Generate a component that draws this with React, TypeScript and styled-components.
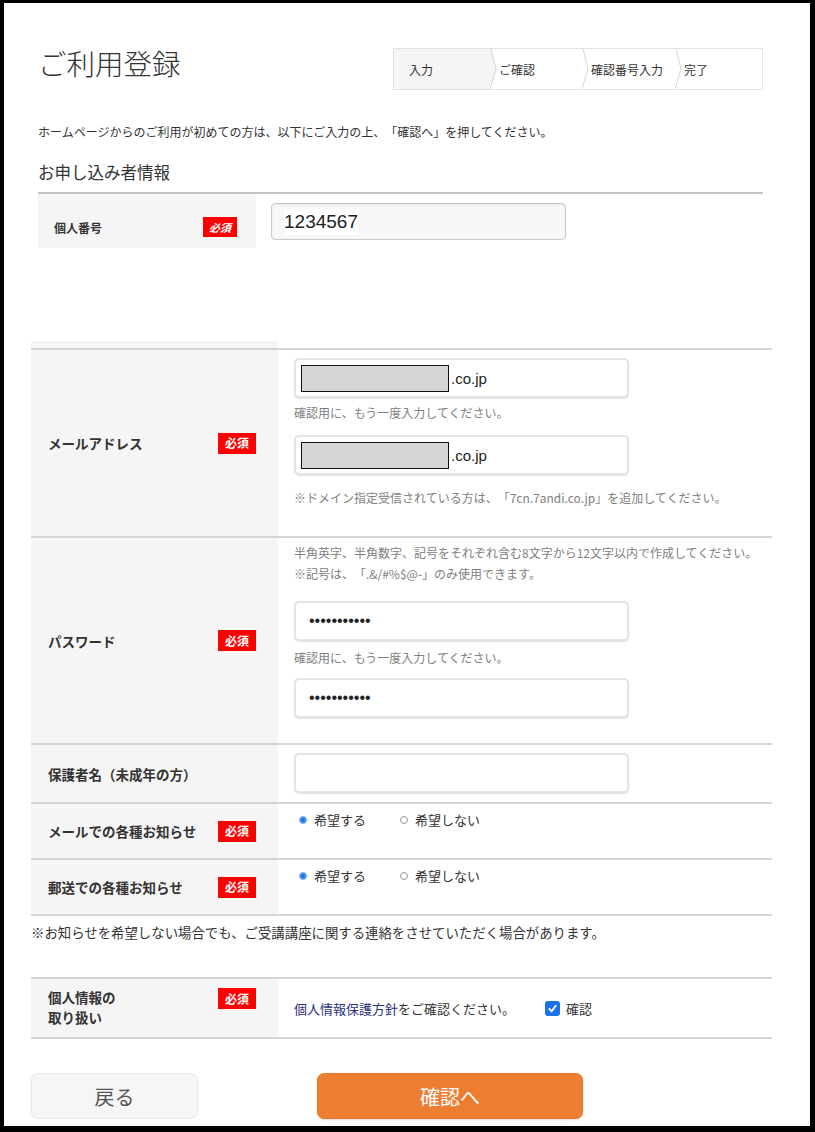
import styled, { createGlobalStyle } from "styled-components";

const GlobalStyle = createGlobalStyle`
  html, body {
    margin: 0;
    padding: 0;
    background: #fff;
  }
  body {
    font-family: "Noto Sans CJK JP", "Noto Sans", sans-serif;
    color: #333;
    text-spacing-trim: space-all;
  }
  * {
    box-sizing: border-box;
  }
`;

const Frame = styled.div`
  width: 815px;
  height: 1132px;
  border-style: solid;
  border-color: #000;
  border-width: 3px 5px 6px 4px;
  background: #fff;
  overflow: hidden;
`;

const Top = styled.section`
  margin-left: 34px;
  width: 725px;
`;

const Header = styled.header`
  display: flex;
  justify-content: space-between;
  align-items: flex-start;
  padding-top: 45px;
`;

const Title = styled.h1`
  margin: -3px 0 0;
  font-size: 28.5px;
  font-weight: 300;
  line-height: 36px;
  color: #333;
`;

const StepBar = styled.ol`
  display: flex;
  margin: 0;
  padding: 0;
  list-style: none;
  width: 370px;
  height: 42px;
  border: 1px solid #e2e2e2;
  background: #fff;
`;

const Step = styled.li<{ $active?: boolean; $w?: number; $pad?: number }>`
  display: flex;
  align-items: center;
  flex: ${(p) => (p.$w ? `0 0 ${p.$w}px` : "1")};
  padding-left: ${(p) => p.$pad ?? 2}px;
  font-size: 12px;
  color: #333;
  background: ${(p) => (p.$active ? "#f5f5f5" : "#fff")};
`;

const ChevronBox = styled.svg`
  flex: 0 0 7px;
  height: 40px;
  display: block;
`;

function Chevron({ filled }: { filled?: boolean }) {
  return (
    <ChevronBox viewBox="0 0 7 40" preserveAspectRatio="none">
      {filled && <polygon points="0,0 1,0 6,20 0,40" fill="#f5f5f5" />}
      <polyline points="1,0 6,20 0,40" fill="none" stroke="#d4d4d4" strokeWidth="1" />
    </ChevronBox>
  );
}

const Intro = styled.p`
  margin: 33px 0 0;
  font-size: 12px;
  line-height: 18px;
`;

const SectionTitle = styled.h2`
  margin: 19px 0 0;
  font-size: 16.5px;
  font-weight: 400;
  line-height: 24px;
`;

const Rule = styled.div`
  margin-top: 8px;
  border-top: 2px solid #c4c4c4;
`;

const TopRow = styled.div`
  display: flex;
  height: 54px;
`;

const TopLabel = styled.div`
  width: 218px;
  display: flex;
  align-items: center;
  justify-content: space-between;
  padding: 12px 19px 0 16px;
  background: #f5f5f5;
  font-size: 12px;
  font-weight: 700;
`;

const Badge = styled.span<{ $small?: boolean }>`
  display: inline-flex;
  align-items: center;
  justify-content: center;
  width: ${(p) => (p.$small ? 34 : 38)}px;
  height: ${(p) => (p.$small ? 20 : 21)}px;
  flex-shrink: 0;
  background: #f00;
  color: #fff;
  font-size: ${(p) => (p.$small ? 11 : 12)}px;
  font-weight: 700;
  font-style: ${(p) => (p.$small ? "italic" : "normal")};
`;

const TopField = styled.div`
  margin: 9px 0 0 15px;
  width: 295px;
  height: 37px;
  display: flex;
  align-items: center;
  padding-left: 12px;
  border: 1px solid #c9c9c9;
  border-radius: 4px;
  background: #f8f8f8;
  box-shadow: inset 0 1px 2px rgba(0, 0, 0, 0.08);
`;

const TopValue = styled.span`
  background: #fff;
  font-family: "Liberation Sans", Arial, sans-serif;
  font-size: 19px;
  line-height: 26px;
  color: #222;
`;

const Lower = styled.section`
  margin: 93px 0 0 27px;
  width: 741px;
`;

const Table = styled.div<{ $mt?: number }>`
  margin-top: ${(p) => p.$mt ?? 0}px;
  border-bottom: 2px solid #d6d6d6;
`;

const Stub = styled.div`
  width: 247px;
  height: 7px;
  background: #f5f5f5;
`;

const Row = styled.div<{ $minH?: number }>`
  display: flex;
  border-top: 2px solid #d6d6d6;
  min-height: ${(p) => p.$minH ?? 0}px;
`;

const Label = styled.div<{ $top?: boolean }>`
  flex: 0 0 247px;
  display: flex;
  align-items: ${(p) => (p.$top ? "flex-start" : "center")};
  justify-content: space-between;
  padding: ${(p) => (p.$top ? "8px 22px 0 17px" : "0 22px 0 17px")};
  background: #f5f5f5;
  font-size: 13.5px;
  font-weight: 700;
  line-height: 20px;
  color: #333;

  ${Badge} {
    margin-top: ${(p) => (p.$top ? 1 : 0)}px;
  }
`;

const Cell = styled.div<{ $pt?: number; $pb?: number; $center?: boolean }>`
  flex: 1;
  padding: ${(p) => p.$pt ?? 0}px 0 ${(p) => p.$pb ?? 0}px 16px;
  display: flex;
  flex-direction: ${(p) => (p.$center ? "row" : "column")};
  align-items: ${(p) => (p.$center ? "center" : "flex-start")};
`;

const Field = styled.div<{ $mt?: number }>`
  margin-top: ${(p) => p.$mt ?? 0}px;
  width: 335px;
  height: 40px;
  display: flex;
  align-items: center;
  padding-left: 5px;
  border: 2px solid #e4e4e4;
  border-radius: 5px;
  background: #fff;
  box-shadow: 0 1px 1px rgba(0, 0, 0, 0.12);
`;

const Redacted = styled.span`
  width: 148px;
  height: 27px;
  border: 1.5px solid #111;
  background: #d6d6d6;
`;

const Domain = styled.span`
  margin-left: 2px;
  font-family: "Liberation Sans", Arial, sans-serif;
  font-size: 15px;
  color: #222;
`;

const Dots = styled.span`
  padding-left: 8px;
  font-family: "Liberation Sans", Arial, sans-serif;
  font-size: 16px;
  color: #222;
`;

const Hint = styled.p<{ $mt?: number; $lh?: number }>`
  margin: ${(p) => p.$mt ?? 0}px 0 0;
  font-size: 12px;
  line-height: ${(p) => p.$lh ?? 15}px;
  color: #808080;
`;

const RadioGroup = styled.div`
  display: flex;
  align-items: center;
  padding-left: 5px;
  line-height: 18px;
  font-size: 13px;
  color: #333;
`;

const RadioOption = styled.label`
  display: flex;
  align-items: center;
  gap: 7px;
  margin-right: 34px;
`;

const RadioDot = styled.span<{ $on?: boolean }>`
  width: 8px;
  height: 8px;
  border-radius: 50%;
  border: 1px solid ${(p) => (p.$on ? "#7fb2f0" : "#999")};
  background: ${(p) => (p.$on ? "#1a73e8" : "#fff")};
  box-shadow: ${(p) => (p.$on ? "inset 0 0 0 1px #4d94f0" : "none")};
`;

const Note = styled.p`
  margin: 7px 0 0;
  font-size: 13.4px;
  line-height: 18px;
  color: #333;
`;

const Body = styled.span`
  font-size: 13px;
  color: #333;
`;

const PolicyLink = styled.a`
  color: #2a3180;
  text-decoration: none;
`;

const Check = styled.span`
  margin-left: 30px;
  width: 15px;
  height: 15px;
  border-radius: 3px;
  background: #1a73e8;
  display: inline-flex;
  align-items: center;
  justify-content: center;
`;

const CheckText = styled.span`
  margin-left: 6px;
  font-size: 13px;
  color: #333;
`;

const Buttons = styled.div`
  display: flex;
  gap: 119px;
  margin-top: 34px;
`;

const Button = styled.button<{ $primary?: boolean }>`
  width: ${(p) => (p.$primary ? 266 : 167)}px;
  height: 46px;
  border-radius: 7px;
  border: 1px solid ${(p) => (p.$primary ? "#e6782c" : "#e6e6e6")};
  background: ${(p) => (p.$primary ? "#ed7d31" : "#f6f6f6")};
  color: ${(p) => (p.$primary ? "#fff" : "#555")};
  font-family: "Noto Sans CJK JP", sans-serif;
  font-size: 20px;
  box-shadow: ${(p) => (p.$primary ? "0 1px 2px rgba(0,0,0,0.15)" : "none")};
  cursor: pointer;
`;

function Radios() {
  return (
    <RadioGroup>
      <RadioOption>
        <RadioDot $on />
        希望する
      </RadioOption>
      <RadioOption>
        <RadioDot />
        希望しない
      </RadioOption>
    </RadioGroup>
  );
}

export default function App() {
  return (
    <>
      <GlobalStyle />
      <Frame>
        <Top>
          <Header>
            <Title>ご利用登録</Title>
            <StepBar>
              <Step $active $w={96} $pad={15}>
                入力
              </Step>
              <Chevron filled />
              <Step $w={85}>ご確認</Step>
              <Chevron />
              <Step $w={86}>確認番号入力</Step>
              <Chevron />
              <Step>完了</Step>
            </StepBar>
          </Header>
          <Intro>ホームページからのご利用が初めての方は、以下にご入力の上、「確認へ」を押してください。</Intro>
          <SectionTitle>お申し込み者情報</SectionTitle>
          <Rule />
          <TopRow>
            <TopLabel>
              個人番号
              <Badge $small>必須</Badge>
            </TopLabel>
            <TopField>
              <TopValue>1234567</TopValue>
            </TopField>
          </TopRow>
        </Top>

        <Lower>
          <Table>
            <Stub />
            <Row>
              <Label>
                メールアドレス
                <Badge>必須</Badge>
              </Label>
              <Cell $pt={8} $pb={30}>
                <Field>
                  <Redacted />
                  <Domain>.co.jp</Domain>
                </Field>
                <Hint $mt={7}>確認用に、もう一度入力してください。</Hint>
                <Field $mt={15}>
                  <Redacted />
                  <Domain>.co.jp</Domain>
                </Field>
                <Hint $mt={15} $lh={16}>
                  ※ドメイン指定受信されている方は、「7cn.7andi.co.jp」を追加してください。
                </Hint>
              </Cell>
            </Row>
            <Row>
              <Label>
                パスワード
                <Badge>必須</Badge>
              </Label>
              <Cell $pt={4} $pb={25}>
                <Hint $lh={21}>
                  半角英字、半角数字、記号をそれぞれ含む8文字から12文字以内で作成してください。
                  <br />
                  ※記号は、「.&amp;/#%$@-」のみ使用できます。
                </Hint>
                <Field $mt={17}>
                  <Dots>•••••••••••</Dots>
                </Field>
                <Hint $mt={9}>確認用に、もう一度入力してください。</Hint>
                <Field $mt={13}>
                  <Dots>•••••••••••</Dots>
                </Field>
              </Cell>
            </Row>
            <Row>
              <Label>保護者名（未成年の方）</Label>
              <Cell $pt={8} $pb={9}>
                <Field />
              </Cell>
            </Row>
            <Row $minH={56}>
              <Label>
                メールでの各種お知らせ
                <Badge>必須</Badge>
              </Label>
              <Cell $pt={7}>
                <Radios />
              </Cell>
            </Row>
            <Row $minH={56}>
              <Label>
                郵送での各種お知らせ
                <Badge>必須</Badge>
              </Label>
              <Cell $pt={7}>
                <Radios />
              </Cell>
            </Row>
          </Table>

          <Note>※お知らせを希望しない場合でも、ご受講講座に関する連絡をさせていただく場合があります。</Note>

          <Table $mt={36}>
            <Row $minH={60}>
              <Label $top>
                <span>
                  個人情報の
                  <br />
                  取り扱い
                </span>
                <Badge>必須</Badge>
              </Label>
              <Cell $center>
                <Body>
                  <PolicyLink href="#">個人情報保護方針</PolicyLink>をご確認ください。
                </Body>
                <Check>
                  <svg width="11" height="11" viewBox="0 0 12 12">
                    <path d="M2.5 6.5 L5 9 L9.5 3" fill="none" stroke="#fff" strokeWidth="2" strokeLinecap="round" strokeLinejoin="round" />
                  </svg>
                </Check>
                <CheckText>確認</CheckText>
              </Cell>
            </Row>
          </Table>

          <Buttons>
            <Button>戻る</Button>
            <Button $primary>確認へ</Button>
          </Buttons>
        </Lower>
      </Frame>
    </>
  );
}
